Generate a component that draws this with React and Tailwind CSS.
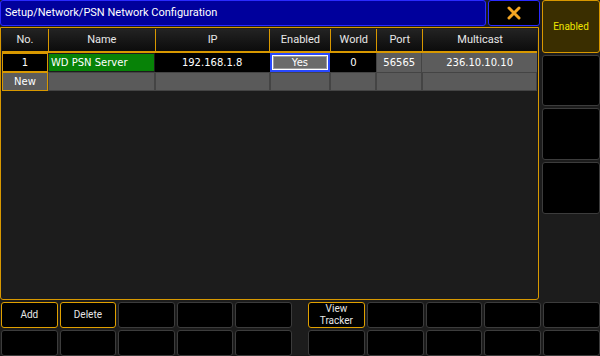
import React from "react";

const COLS = [
  { h: "No.", w: 46 },
  { h: "Name", w: 107 },
  { h: "IP", w: 115 },
  { h: "Enabled", w: 61 },
  { h: "World", w: 46 },
  { h: "Port", w: 46 },
  { h: "Multicast", w: 115 },
];

const CELL_FONT = { fontFamily: "'DejaVu Sans', Roboto, sans-serif" };

function Btn({ children, on, className = "" }) {
  return (
    <div
      className={`rounded-[3px] border flex items-center justify-center text-center leading-[12px] text-[10px] text-[#e6e6e6] bg-black ${
        on ? "border-[#e0a000]" : "border-[#3c3c3c]"
      } ${className}`}
    >
      {children}
    </div>
  );
}

export default function App() {
  return (
    <div
      className="w-[600px] h-[356px] bg-[#1c1c1c] flex flex-col overflow-hidden"
      style={{ fontFamily: "Roboto, 'DejaVu Sans', sans-serif" }}
    >
      <div className="flex h-[300px]">
        {/* left: title + panel */}
        <div className="w-[541px] flex flex-col">
          <div className="flex h-[27px] gap-[2px]">
            <div className="w-[486px] h-[26px] rounded-[3px] border border-[#2a2aff] bg-[#00009c] text-white text-[11px] flex items-center pl-[4px]">
              Setup/Network/PSN Network Configuration
            </div>
            <div className="w-[52px] h-[26px] rounded-[3px] border border-[#2a2aff] bg-black flex items-center justify-center">
              <svg width="16" height="16" viewBox="0 0 16 16">
                <path d="M3 3 L13 13 M13 3 L3 13" stroke="#f5a623" strokeWidth="3" strokeLinecap="round" />
              </svg>
            </div>
          </div>
          <div className="flex-1 mr-[2px] border border-[#d89800] rounded-b-[3px] bg-[#1c1c1c] p-[1px]">
            {/* header */}
            <div className="flex h-[24px] border-b-2 border-[#d89800]">
              {COLS.map((c, i) => (
                <div
                  key={c.h}
                  style={{ width: c.w }}
                  className={`h-full flex items-center justify-center text-[11px] text-[#e8e8e8] bg-gradient-to-b from-[#232323] to-[#0c0c0c] border-[#d89800] ${
                    i > 0 ? "border-l" : ""
                  }`}
                >
                  {c.h}
                </div>
              ))}
            </div>
            {/* row 1 */}
            <div className="flex h-[19px] text-[10px] text-white" style={CELL_FONT}>
              <div style={{ width: 46 }} className="bg-black border border-[#d89800] flex items-center justify-center">1</div>
              <div style={{ width: 107 }} className="bg-[#078207] border border-[#1c1c1c] flex items-center pl-[2px]">WD PSN Server</div>
              <div style={{ width: 115 }} className="bg-black flex items-center justify-center">192.168.1.8</div>
              <div style={{ width: 61 }} className="border-2 border-[#2848ff] bg-white p-[1px]">
                <div className="h-full bg-[#6a6a6a] border border-[#9a9a9a] flex items-center justify-center">Yes</div>
              </div>
              <div style={{ width: 46 }} className="bg-black flex items-center justify-center">0</div>
              <div style={{ width: 46 }} className="bg-[#5c5c5c] border-x border-[#444] flex items-center justify-center">56565</div>
              <div style={{ width: 115 }} className="bg-[#5c5c5c] flex items-center justify-center">236.10.10.10</div>
            </div>
            {/* row 2 */}
            <div className="flex h-[19px] text-[10px] text-white" style={CELL_FONT}>
              <div style={{ width: 46 }} className="bg-[#5c5c5c] border border-[#d89800] flex items-center justify-center">New</div>
              {COLS.slice(1).map((c) => (
                <div key={c.h} style={{ width: c.w }} className="bg-[#5a5a5a] border border-[#444]" />
              ))}
            </div>
          </div>
        </div>
        {/* right column */}
        <div className="w-[59px] flex flex-col gap-[2px] pl-[1px]">
          <div className="h-[53px] rounded-[3px] border border-[#d89800] bg-[#3a2e00] flex items-center justify-center text-[10px] text-[#f0e600]">
            Enabled
          </div>
          <Btn className="h-[51px]" />
          <Btn className="h-[52px]" />
          <Btn className="h-[52px]" />
        </div>
      </div>
      {/* bottom buttons */}
      <div className="flex flex-col gap-[2px] pt-[2px]">
        {[0, 1].map((r) => (
          <div key={r} className="flex h-[26px]">
            <div className="w-[291px] ml-[1px] grid grid-cols-5 gap-[2px]">
              {[0, 1, 2, 3, 4].map((c) => (
                <Btn key={c} on={r === 0 && c < 2}>
                  {r === 0 && c === 0 ? "Add" : r === 0 && c === 1 ? "Delete" : ""}
                </Btn>
              ))}
            </div>
            <div className="w-[292px] ml-[16px] grid grid-cols-5 gap-[2px]">
              {[0, 1, 2, 3, 4].map((c) => (
                <Btn key={c} on={r === 0 && c === 0}>
                  {r === 0 && c === 0 ? (
                    <span>
                      View
                      <br />
                      Tracker
                    </span>
                  ) : (
                    ""
                  )}
                </Btn>
              ))}
            </div>
          </div>
        ))}
      </div>
    </div>
  );
}
